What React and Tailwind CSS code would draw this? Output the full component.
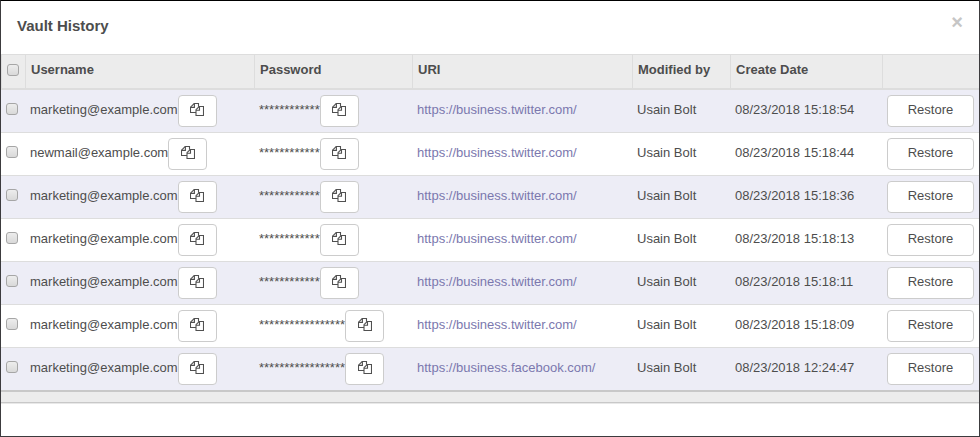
import React from "react";

const COLS = "grid grid-cols-[24px_229px_158px_220px_98px_152px_97px]";
const HEADERS = ["Username", "Password", "URI", "Modified by", "Create Date", ""];

const TWITTER = "https://business.twitter.com/";
const ROWS = [
  ["marketing@example.com", 12, TWITTER, "08/23/2018 15:18:54"],
  ["newmail@example.com", 12, TWITTER, "08/23/2018 15:18:44"],
  ["marketing@example.com", 12, TWITTER, "08/23/2018 15:18:36"],
  ["marketing@example.com", 12, TWITTER, "08/23/2018 15:18:13"],
  ["marketing@example.com", 12, TWITTER, "08/23/2018 15:18:11"],
  ["marketing@example.com", 17, TWITTER, "08/23/2018 15:18:09"],
  ["marketing@example.com", 17, "https://business.facebook.com/", "08/23/2018 12:24:47"],
];

function Checkbox() {
  return (
    <input
      type="checkbox"
      className="block h-3 w-3 shrink-0 appearance-none rounded-[3px] border border-[#a6a6a6] bg-linear-to-b from-[#ededed] to-[#d9d9d9]"
    />
  );
}

function CopyButton() {
  return (
    <button className="flex h-8 w-[39px] shrink-0 items-start justify-center rounded-[4px] border border-[#ccc] bg-white pt-[7px]">
      <svg viewBox="0 0 14 13" className="h-[13px] w-[14px] fill-none stroke-[#505050] stroke-[1.1]">
        <path d="M6 9.5H.5V4.2L4.2 .5H8.5V3.7" />
        <path d="M4.4 .5V4.4H.5" />
        <path d="M9.2 3.5H13.5V12.5H6V6.7Z" />
        <path d="M9.5 3.5V7.2H6" />
      </svg>
    </button>
  );
}

function Secret({ text }) {
  return (
    <div className="flex items-start pt-[5px] pl-[5px]">
      <span className="leading-[30px]">{text}</span>
      <CopyButton />
    </div>
  );
}

function Row({ row }) {
  const [user, length, uri, date] = row;
  return (
    <div className={`${COLS} h-[43px] border-b border-[#ddd] odd:bg-[#ededf6] even:bg-white last:h-[44px] last:border-b-2 last:border-[#c8c8c8]`}>
      <div className="pt-[13px] pl-[5px]">
        <Checkbox />
      </div>
      <Secret text={user} />
      <Secret text={"*".repeat(length)} />
      <div className="pt-[5px] pl-[5px] leading-[30px] text-[#7b78ae]">{uri}</div>
      <div className="pt-[5px] pl-[5px] leading-[30px]">Usain Bolt</div>
      <div className="pt-[5px] pl-[5px] leading-[30px]">{date}</div>
      <div className="pt-[5px] pl-[5px]">
        <button className="block h-8 w-[87px] rounded-[4px] border border-[#ccc] bg-white pb-[3px] leading-[27px]">
          Restore
        </button>
      </div>
    </div>
  );
}

export default function App() {
  return (
    <div className="h-[437px] w-[980px] overflow-hidden border border-[#3c3b3e] border-t-black bg-white font-['Liberation_Sans',Arial,sans-serif] text-[13px] text-[#4d4d4d]">
      <header className="flex h-[53px] items-start justify-between pr-4 pl-4">
        <h1 className="pt-[15px] text-[15px] leading-5 font-bold">Vault History</h1>
        <button className="pt-[11px] text-[20px] leading-5 font-bold text-[#c6c6c6]">×</button>
      </header>
      <div className={`${COLS} h-9 border-t border-b-2 border-[#ddd] bg-[#ececec] font-bold`}>
        <div className="border-l border-[#ddd] pt-[9px] pl-[5px]">
          <Checkbox />
        </div>
        {HEADERS.map((label) => (
          <div key={label} className="border-l border-[#ddd] pt-[5px] pl-[5px] leading-5">
            {label}
          </div>
        ))}
      </div>
      <div>
        {ROWS.map((row) => (
          <Row key={row[3]} row={row} />
        ))}
      </div>
      <div className="h-[11px] border-b border-[#c8c8c8] bg-[#ececec] shadow-[0_1px_0_#e8e8e8]" />
    </div>
  );
}
